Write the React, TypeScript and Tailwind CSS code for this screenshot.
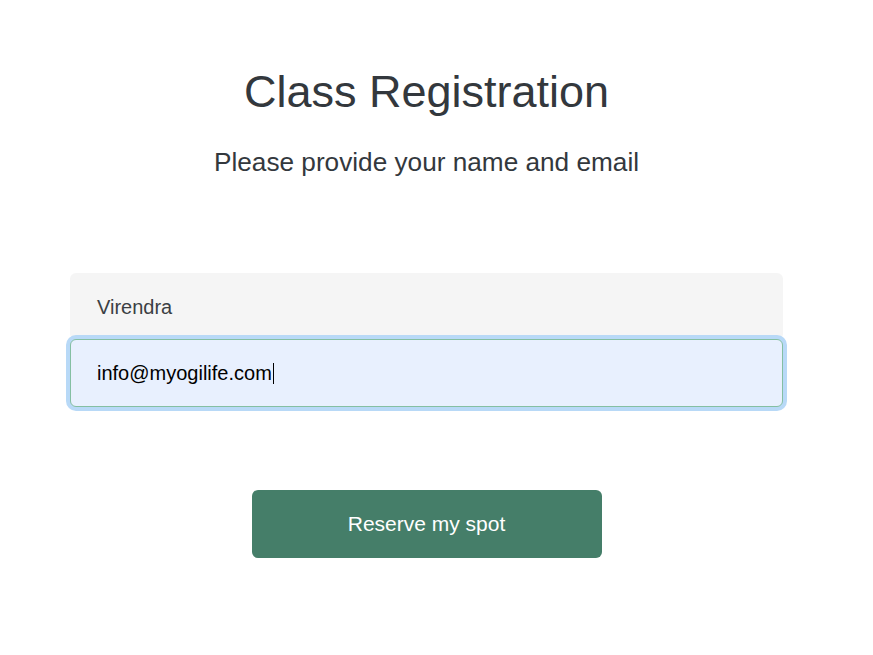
import React from "react";

export default function App() {
  return (
    <div
      className="min-h-[655px] w-[873px] bg-white"
      style={{ fontFamily: '"Liberation Sans", Arial, sans-serif' }}
    >
      <div className="ml-[70px] flex w-[713px] flex-col items-center pt-[66px]">
        <h1 className="text-[45px] leading-[52px] text-[#33383d] font-normal">
          Class Registration
        </h1>
        <p className="mt-[29px] text-[26.2px] leading-[30px] text-[#33383d]">
          Please provide your name and email
        </p>
        <div className="mt-[96px] flex w-full flex-col">
          <div className="flex h-[67px] w-full items-center rounded-[6px] bg-[#f5f5f5] pl-[27px] text-[20px] text-[#3b3f44]">
            Virendra
          </div>
          <div className="relative z-10 -mt-[1px] flex h-[68px] w-full items-center rounded-[6px] border border-[#84bfa3] bg-[#e8f0fe] pl-[26px] text-[20px] text-black shadow-[0_0_0_4px_#b8d9f7]">
            <span>info@myogilife.com</span>
            <span className="ml-[1px] inline-block h-[21px] w-[1px] bg-black" />
          </div>
        </div>
        <button className="mt-[83px] flex h-[68px] w-[350px] items-center justify-center rounded-[6px] bg-[#457e69] text-[21px] text-white">
          Reserve my spot
        </button>
      </div>
    </div>
  );
}
